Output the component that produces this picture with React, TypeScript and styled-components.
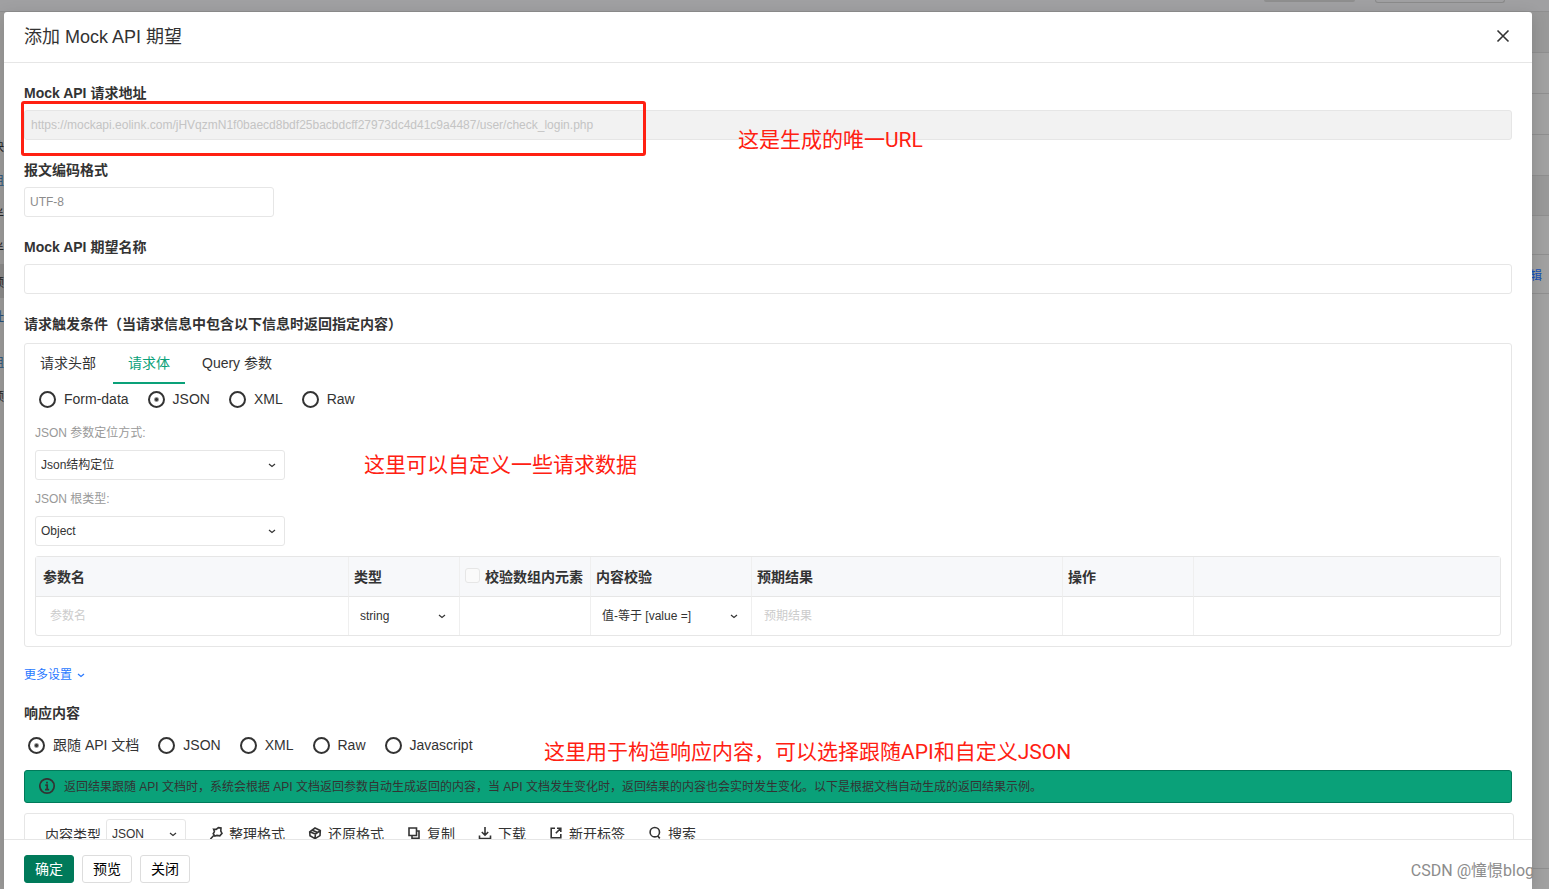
import React from "react";
import styled, { createGlobalStyle, css } from "styled-components";

const sans = `"Liberation Sans", "Noto Sans CJK SC", sans-serif`;
const line = "#e6e6e6";

const GlobalStyle = createGlobalStyle`
  *, *::before, *::after { box-sizing: border-box; }
  body { margin: 0; font-family: ${sans}; font-size: 14px; color: #333; }
  button, input, select { font-family: inherit; }
`;

const Page = styled.div`
  position: relative;
  height: 100vh;
  overflow: hidden;
  display: flex;
  flex-direction: column;
  background: #a1a1a1;
`;

const Backdrop = styled.div`
  position: absolute;
  inset: 0;
  display: flex;
  flex-direction: column;
`;

const BackTop = styled.div`
  flex: none;
  height: 12px;
  display: flex;
  justify-content: flex-end;
  gap: 20px;
  padding-right: 44px;
  background: #a0a0a2;
  border-bottom: 1px solid #8f8f8f;
`;

const BackPill = styled.div<{ $filled?: boolean }>`
  width: ${(p) => (p.$filled ? 91 : 130)}px;
  height: ${(p) => (p.$filled ? 2 : 3)}px;
  border-radius: 0 0 12px 12px;
  ${(p) => (p.$filled ? css`background: #8e8e8e;` : css`border: 1px solid #8a8a8a; border-top: 0;`)}
`;

const BackContent = styled.div`
  flex: 1;
  min-height: 0;
  display: flex;
`;

const BackSide = styled.div`
  flex: none;
  width: 4px;
  overflow: hidden;
  padding-top: 116px;
  background: #9d9c9b;
`;

const BackItem = styled.div<{ $link?: boolean; $active?: boolean; $gap?: boolean }>`
  height: 34px;
  margin-top: ${(p) => (p.$gap ? 12 : 0)}px;
  display: flex;
  align-items: center;
  justify-content: flex-end;
  background: ${(p) => (p.$active ? "#8d8c8b" : "transparent")};
  font-size: 12px;
  color: ${(p) => (p.$link ? "#24507c" : "#222")};
`;

const BackMain = styled.div`
  flex: 1;
  display: flex;
  flex-direction: column;
`;

const BackRow = styled.div<{ $h: number; $dark?: boolean }>`
  flex: none;
  height: ${(p) => p.$h}px;
  display: flex;
  align-items: center;
  justify-content: flex-end;
  padding-right: 7px;
  background: ${(p) => (p.$dark ? "#999" : "#a1a1a1")};
  border-bottom: 1px solid #8f8f8f;
  font-size: 12px;
  color: #1450b8;
`;

const BackFoot = styled.div`
  height: 21px;
  margin-top: auto;
  border-top: 1px solid #8f8f8f;
`;

const Dialog = styled.section`
  position: relative;
  flex: 1;
  min-height: 0;
  margin: 12px 17px 0 4px;
  display: flex;
  flex-direction: column;
  background: #fff;
  border-radius: 3px 3px 0 0;
  box-shadow: 0 4px 16px rgba(0, 0, 0, 0.15);
`;

const Header = styled.header`
  flex: none;
  height: 51px;
  display: flex;
  align-items: center;
  justify-content: space-between;
  padding: 0 20px 2px;
  border-bottom: 1px solid ${line};
`;

const Title = styled.h1`
  margin: 0;
  padding-bottom: 2px;
  font-size: 18px;
  font-weight: 400;
`;

const CloseButton = styled.button`
  display: flex;
  padding: 0;
  border: 0;
  background: none;
  color: #333;
`;

const Body = styled.form`
  position: relative;
  flex: 1;
  min-height: 0;
  overflow: hidden;
  padding: 13px 20px 0;
`;

const Field = styled.div`
  margin-bottom: 13px;
`;

const Label = styled.label`
  display: block;
  line-height: 34px;
  font-weight: 700;
`;

const Heading = styled.h2`
  margin: 0;
  line-height: 34px;
  font-size: 14px;
  font-weight: 700;
`;

const TextBox = styled.input<{ $short?: boolean }>`
  display: block;
  width: ${(p) => (p.$short ? "250px" : "100%")};
  height: 30px;
  padding: 0 5px;
  border: 1px solid ${line};
  border-radius: 3px;
  background: #fff;
  font-size: 12px;
  color: #8c8c8c;
  &:disabled {
    padding: 0 6px;
    background: #f2f2f2;
    color: #c4c4c4;
  }
`;

const Panel = styled.section`
  margin-top: 2px;
  padding: 0 10px 10px;
  border: 1px solid ${line};
  border-radius: 3px;
`;

const Tabs = styled.div`
  display: flex;
  gap: 2px;
  margin: 0 -10px;
`;

const Tab = styled.button<{ $active?: boolean }>`
  height: 40px;
  padding: 0 15px 2px;
  border: 0;
  border-bottom: 2px solid ${(p) => (p.$active ? "#0aa179" : "transparent")};
  background: none;
  font-size: 14px;
  color: ${(p) => (p.$active ? "#0aa179" : "#333")};
`;

const RadioGroup = styled.div`
  height: 30px;
  display: flex;
  align-items: center;
  gap: 19px;
  padding-left: 4px;
`;

const RadioLabel = styled.label`
  display: flex;
  align-items: center;
  gap: 8px;
  line-height: 16px;
`;

const Radio = styled.input`
  appearance: none;
  width: 17px;
  height: 17px;
  margin: 0;
  border: 2px solid #333;
  border-radius: 50%;
  &:checked {
    background: radial-gradient(circle, #333 0 1px, transparent 3px);
  }
`;

const SmallLabel = styled.label`
  display: block;
  height: 36px;
  padding-top: 1px;
  line-height: 36px;
  font-size: 12px;
  color: #999;
`;

const SelectWrap = styled.div<{ $width: string; $plain?: boolean }>`
  display: flex;
  align-items: center;
  width: ${(p) => p.$width};
  height: 30px;
  padding-right: ${(p) => (p.$plain ? 6 : 7)}px;
  border: 1px solid ${(p) => (p.$plain ? "transparent" : line)};
  border-radius: 3px;
`;

const SelectBox = styled.select`
  appearance: none;
  flex: 1;
  min-width: 0;
  height: 28px;
  padding: 0 5px;
  border: 0;
  background: none;
  font-size: 12px;
  color: #333;
`;

const Table = styled.table`
  width: 100%;
  margin-top: 10px;
  table-layout: fixed;
  border-collapse: separate;
  border-spacing: 0;
  border: 1px solid ${line};
  border-radius: 3px;
`;

const Th = styled.th`
  height: 40px;
  padding: 0 5px 2px;
  background: #f7f8fa;
  border-bottom: 1px solid ${line};
  text-align: left;
  font-size: 14px;
  white-space: nowrap;
  & + & { border-left: 1px solid #efefef; }
  &:first-child { padding-left: 7px; }
`;

const Td = styled.td`
  height: 38px;
  padding: 0 5px;
  & + & { border-left: 1px solid #efefef; }
  &:first-child { padding-left: 7px; }
`;

const CheckLabel = styled.label`
  display: flex;
  align-items: center;
  gap: 5px;
`;

const Check = styled.input`
  appearance: none;
  width: 15px;
  height: 15px;
  margin: 0;
  border: 1px solid ${line};
  border-radius: 3px;
  background: #fafafa;
`;

const CellInput = styled.input`
  display: block;
  width: 100%;
  height: 30px;
  padding: 0 7px;
  border: 0;
  background: none;
  font-size: 12px;
  &::placeholder { color: #ccc; }
`;

const MoreLink = styled.a`
  display: flex;
  align-items: center;
  gap: 4px;
  width: max-content;
  height: 18px;
  margin: 19px 0 12px;
  font-size: 12px;
  line-height: 16px;
  color: #2878ff;
  text-decoration: none;
`;

const Notice = styled.p`
  height: 33px;
  display: flex;
  align-items: center;
  gap: 8px;
  margin: 10px 0;
  padding: 0 14px;
  border: 1px solid #007a5a;
  border-radius: 3px;
  background: #0aa179;
  font-size: 12px;
`;

const NoticeText = styled.span`
  padding-bottom: 3px;
`;

const Editor = styled.section`
  height: 300px;
  margin-right: -2px;
  padding: 5px 20px;
  border: 1px solid ${line};
  border-radius: 3px;
`;

const Toolbar = styled.div`
  height: 30px;
  display: flex;
  align-items: center;
  gap: 23px;
`;

const TypeLabel = styled.label`
  display: flex;
  align-items: center;
  gap: 5px;
`;

const Tool = styled.button`
  display: flex;
  align-items: center;
  gap: 6px;
  padding: 0 0 2px;
  border: 0;
  background: none;
  font-size: 14px;
  color: #333;
`;

const Footer = styled.footer`
  flex: none;
  height: 50px;
  display: flex;
  align-items: flex-start;
  gap: 8px;
  padding: 15px 20px 0;
  border-top: 1px solid ${line};
`;

const Button = styled.button<{ $primary?: boolean }>`
  width: 50px;
  height: 28px;
  padding: 0 0 2px;
  border: 1px solid ${(p) => (p.$primary ? "#007a5a" : "#ddd")};
  border-radius: 3px;
  background: ${(p) => (p.$primary ? "#007a5a" : "#fff")};
  font-size: 14px;
  color: ${(p) => (p.$primary ? "#fff" : "#000")};
`;

const Highlight = styled.div`
  position: absolute;
  left: 17px;
  top: 38px;
  width: 625px;
  height: 55px;
  border: 3px solid #ff2012;
  border-radius: 3px;
`;

const Note = styled.span<{ $x: number; $y: number }>`
  position: absolute;
  left: ${(p) => p.$x}px;
  top: ${(p) => p.$y}px;
  font-family: Roboto, "Noto Sans CJK SC", sans-serif;
  font-size: 21px;
  line-height: 30px;
  white-space: nowrap;
  color: #ff2012;
`;

const Watermark = styled.span`
  position: absolute;
  right: 15px;
  bottom: 6px;
  font-family: Roboto, "Noto Sans CJK SC", sans-serif;
  font-size: 16px;
  line-height: 24px;
  color: #8c8c8c;
`;

const Chevron = () => (
  <svg width="10" height="10" viewBox="0 0 10 10" fill="none" stroke="currentColor" strokeWidth="1.2">
    <path d="M2 4 5 6.500 8 4" />
  </svg>
);

const icons: Record<string, React.ReactNode> = {
  format: <path d="M4.600 3.200 7.200 3.400 9.400 1.600 12 2 11.800 5 13 7.400 10.800 9.800 8 9.400 5.800 10 4.200 7.800 5.400 5.600ZM5 9.200 1.400 13" />,
  restore: <path d="M7 2 12.300 4.600 12 9.600 7 12.600 2 9.800 1.700 5.800ZM1.700 5.800 7.400 8 12.300 4.600M7.400 8 7 12.600M4.400 4.200 9.600 6.400" />,
  copy: <path d="M2 2h7.500v7.500H2ZM9.500 5H12v7.200H5V9.500" />,
  download: <path d="M7 1v8M3.800 6 7 9.200 10.200 6M1.500 9.500v3h11v-3" />,
  open: <path d="M6 2.200H2.200v9.600h9.600V8M8 2.200h3.800V6M11.800 2.200 6.800 7.200" />,
  search: <path d="M11.500 6.200a4.700 4.700 0 1 1-9.400 0 4.700 4.700 0 0 1 9.400 0ZM9.500 9.800l2.300 2.600" />,
};

const Icon = ({ name }: { name: string }) => (
  <svg width="14" height="14" viewBox="0 0 14 14" fill="none" stroke="currentColor" strokeWidth="1.6">
    {icons[name]}
  </svg>
);

function Dropdown({ id, value, width, plain, label }: { id?: string; value: string; width: string; plain?: boolean; label?: string }) {
  return (
    <SelectWrap $width={width} $plain={plain}>
      <SelectBox id={id} defaultValue={value} aria-label={label}>
        <option>{value}</option>
      </SelectBox>
      <Chevron />
    </SelectWrap>
  );
}

function Radios({ name, options, selected }: { name: string; options: string[]; selected: string }) {
  return (
    <RadioGroup role="radiogroup">
      {options.map((o) => (
        <RadioLabel key={o}>
          <Radio type="radio" name={name} defaultChecked={o === selected} />
          {o}
        </RadioLabel>
      ))}
    </RadioGroup>
  );
}

const tools = [
  ["format", "整理格式"],
  ["restore", "还原格式"],
  ["copy", "复制"],
  ["download", "下载"],
  ["open", "新开标签"],
  ["search", "搜索"],
];

export default function App() {
  return (
    <Page>
      <GlobalStyle />
      <Backdrop aria-hidden="true">
        <BackTop>
          <BackPill $filled />
          <BackPill />
        </BackTop>
        <BackContent>
          <BackSide>
            <BackItem>快</BackItem>
            <BackItem $link>组</BackItem>
            <BackItem>半</BackItem>
            <BackItem>半</BackItem>
            <BackItem $active>颜</BackItem>
            <BackItem $link>址</BackItem>
            <BackItem $link $gap>组</BackItem>
            <BackItem>颜</BackItem>
          </BackSide>
          <BackMain>
            <BackRow $h={41} $dark />
            <BackRow $h={41} />
            <BackRow $h={41} />
            <BackRow $h={41} />
            <BackRow $h={40} $dark />
            <BackRow $h={39} />
            <BackRow $h={39}>编辑</BackRow>
            <BackFoot />
          </BackMain>
        </BackContent>
      </Backdrop>
      <Dialog role="dialog" aria-labelledby="title">
        <Header>
          <Title id="title">添加 Mock API 期望</Title>
          <CloseButton aria-label="关闭对话框">
            <svg width="18" height="18" viewBox="0 0 18 18" stroke="currentColor" strokeWidth="1.6">
              <path d="M3.500 3.500 14.500 14.500M14.500 3.500 3.500 14.500" />
            </svg>
          </CloseButton>
        </Header>
        <Body>
          <Field>
            <Label htmlFor="url">Mock API 请求地址</Label>
            <TextBox id="url" disabled defaultValue="https://mockapi.eolink.com/jHVqzmN1f0baecd8bdf25bacbdcff27973dc4d41c9a4487/user/check_login.php" />
          </Field>
          <Field>
            <Label htmlFor="charset">报文编码格式</Label>
            <TextBox id="charset" $short defaultValue="UTF-8" />
          </Field>
          <Field>
            <Label htmlFor="name">Mock API 期望名称</Label>
            <TextBox id="name" />
          </Field>
          <Heading>请求触发条件（当请求信息中包含以下信息时返回指定内容）</Heading>
          <Panel>
            <Tabs>
              <Tab type="button">请求头部</Tab>
              <Tab type="button" $active>请求体</Tab>
              <Tab type="button">Query 参数</Tab>
            </Tabs>
            <Radios name="body" options={["Form-data", "JSON", "XML", "Raw"]} selected="JSON" />
            <SmallLabel htmlFor="locate">JSON 参数定位方式:</SmallLabel>
            <Dropdown id="locate" value="Json结构定位" width="250px" />
            <SmallLabel htmlFor="root-type">JSON 根类型:</SmallLabel>
            <Dropdown id="root-type" value="Object" width="250px" />
            <Table>
              <colgroup>
                <col width="312" />
                <col width="111" />
                <col width="131" />
                <col width="161" />
                <col width="311" />
                <col width="131" />
                <col />
              </colgroup>
              <thead>
                <tr>
                  <Th>参数名</Th>
                  <Th>类型</Th>
                  <Th>
                    <CheckLabel>
                      <Check type="checkbox" />
                      校验数组内元素
                    </CheckLabel>
                  </Th>
                  <Th>内容校验</Th>
                  <Th>预期结果</Th>
                  <Th>操作</Th>
                  <Th />
                </tr>
              </thead>
              <tbody>
                <tr>
                  <Td><CellInput placeholder="参数名" aria-label="参数名" /></Td>
                  <Td><Dropdown plain width="100%" value="string" label="类型" /></Td>
                  <Td />
                  <Td><Dropdown plain width="100%" value="值-等于 [value =]" label="内容校验" /></Td>
                  <Td><CellInput placeholder="预期结果" aria-label="预期结果" /></Td>
                  <Td />
                  <Td />
                </tr>
              </tbody>
            </Table>
          </Panel>
          <MoreLink href="#more">更多设置 <Chevron /></MoreLink>
          <Heading>响应内容</Heading>
          <Radios name="response" options={["跟随 API 文档", "JSON", "XML", "Raw", "Javascript"]} selected="跟随 API 文档" />
          <Notice>
            <svg width="17" height="17" viewBox="0 0 17 17" fill="none" stroke="currentColor" strokeWidth="1.7">
              <circle cx="8" cy="8" r="7.200" />
              <path d="M6.300 7.200h1.900v4.300M6 11.700h4.200M7.100 4.600h1.800" />
            </svg>
            <NoticeText>
              返回结果跟随 API 文档时，系统会根据 API 文档返回参数自动生成返回的内容，当 API 文档发生变化时，返回结果的内容也会实时发生变化。以下是根据文档自动生成的返回结果示例。
            </NoticeText>
          </Notice>
          <Editor>
            <Toolbar>
              <TypeLabel>
                内容类型
                <Dropdown width="80px" value="JSON" />
              </TypeLabel>
              {tools.map(([icon, text]) => (
                <Tool key={text} type="button">
                  <Icon name={icon} />
                  {text}
                </Tool>
              ))}
            </Toolbar>
          </Editor>
          <Highlight />
          <Note $x={734} $y={62}>这是生成的唯一URL</Note>
          <Note $x={360} $y={387}>这里可以自定义一些请求数据</Note>
          <Note $x={540} $y={674}>这里用于构造响应内容，可以选择跟随API和自定义JSON</Note>
        </Body>
        <Footer>
          <Button $primary>确定</Button>
          <Button>预览</Button>
          <Button>关闭</Button>
        </Footer>
      </Dialog>
      <Watermark>CSDN @憧憬blog</Watermark>
    </Page>
  );
}
